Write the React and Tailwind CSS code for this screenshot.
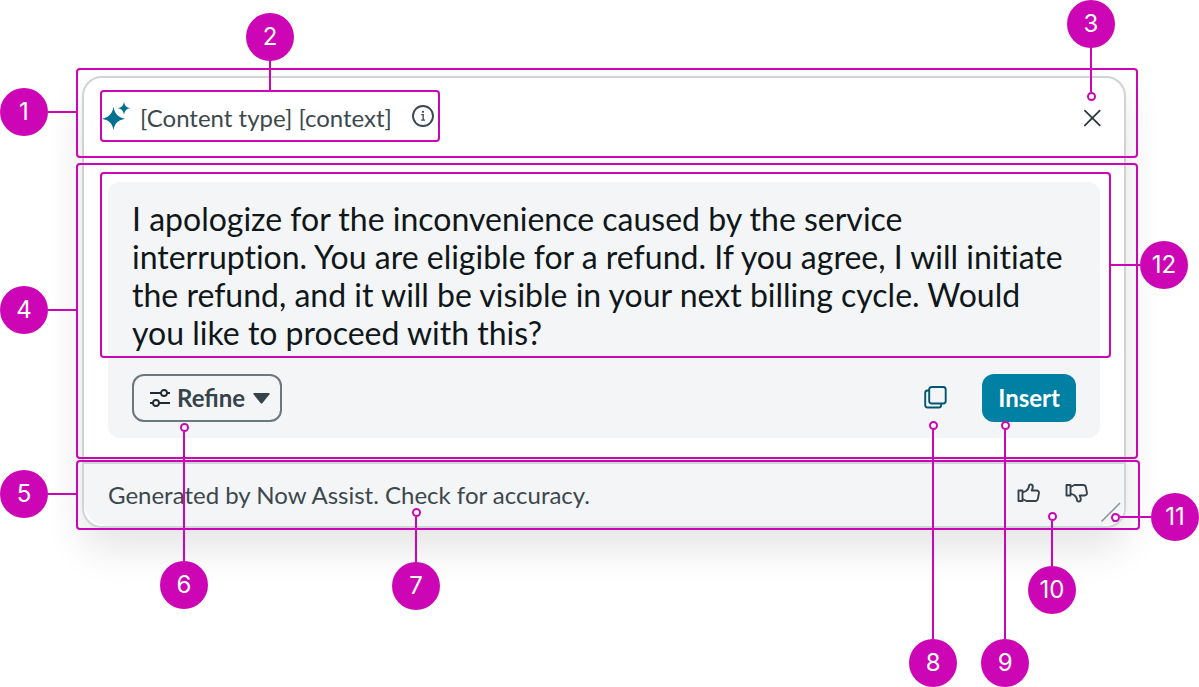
import clsx from 'clsx'

function Frame({ className }) {
  return (
    <div
      className={clsx(
        'absolute border-2 border-[#cc06b4] rounded pointer-events-none',
        className
      )}
    />
  )
}

const directions = {
  right: 'flex-row',
  left: 'flex-row-reverse',
  down: 'flex-col',
  up: 'flex-col-reverse',
}

// direction = where the line goes, starting from the numbered badge
function Callout({ number, direction, dot, className }) {
  const horizontal = direction === 'left' || direction === 'right'

  return (
    <div
      className={clsx(
        'absolute z-10 flex items-center pointer-events-none',
        directions[direction],
        className
      )}
    >
      <span className="flex h-12 w-12 shrink-0 items-center justify-center rounded-full bg-[#cc06b4] font-[Inter,sans-serif] text-2xl leading-6 text-white">
        {number}
      </span>
      <span className={clsx('flex-1 bg-[#cc06b4]', horizontal ? 'h-[2px]' : 'w-[2px]')} />
      {dot && (
        <span className="w-[9px] h-[9px] shrink-0 rounded-full border-2 border-[#cc06b4] bg-white" />
      )}
    </div>
  )
}

function SparkleIcon() {
  return (
    <svg width="28" height="28" viewBox="0 0 28 28" fill="#00718f" aria-hidden="true">
      <path d="M11.500 5C13 12 15.500 15 23 16.800C15.500 18.600 13 21 11.500 28C10 21 7.500 18.600 0 16.800C7.500 15 10 12 11.500 5Z" />
      <path d="M22 0C22.900 3.800 24.200 5.300 28 6.200C24.200 7.100 22.900 8.600 22 12.400C21.100 8.600 19.800 7.100 16 6.200C19.800 5.300 21.100 3.800 22 0Z" />
    </svg>
  )
}

function InfoIcon() {
  return (
    <svg width="22" height="22" viewBox="0 0 22 22" fill="none" stroke="#3c484d" aria-hidden="true">
      <circle cx="11" cy="11" r="10" strokeWidth="1.9" />
      <path d="M9.200 9.700h2v5.300M9.200 15.200h3.800" strokeWidth="1.300" />
      <circle cx="11" cy="6.800" r="1.100" fill="#3c484d" stroke="none" />
    </svg>
  )
}

function CloseIcon() {
  return (
    <svg width="24" height="24" viewBox="0 0 24 24" fill="none" stroke="#2c383d" strokeWidth="1.800" aria-hidden="true">
      <path d="M4.900 4.600l14.800 14.800M19.700 4.600l-14.800 14.800" strokeLinecap="round" />
    </svg>
  )
}

function SlidersIcon() {
  return (
    <svg width="20" height="20" viewBox="0 0 20 20" fill="none" stroke="#1f2b30" strokeWidth="1.800" aria-hidden="true">
      <path d="M0 5h11M17 5h3M0 15h3M9 15h11" />
      <circle cx="14" cy="5" r="3" />
      <circle cx="6" cy="15" r="3" />
    </svg>
  )
}

function CopyIcon() {
  return (
    <svg width="24" height="24" viewBox="0 0 24 24" fill="none" stroke="#00566e" strokeWidth="1.900" aria-hidden="true">
      <rect x="6.200" y="1" width="16.500" height="16.500" rx="2.500" />
      <path d="M6 4.500H4.700Q2.200 4.500 2.200 7V19Q2.200 21.500 4.700 21.500H15.700Q18.200 21.500 18.200 19V17.500" />
    </svg>
  )
}

function ThumbIcon({ down }) {
  return (
    <svg
      width="24"
      height="24"
      viewBox="0 0 24 24"
      fill="none"
      stroke="#36434a"
      strokeWidth="1.900"
      strokeLinejoin="round"
      className={down ? '-scale-y-100' : ''}
      aria-hidden="true"
    >
      <path d="M2.500 9.500h4v10.500h-4z" />
      <path d="M6.500 11.500L10 10C12 8.500 13 6.500 13 4.700C13 3.100 16.800 2.700 16.800 5.700C16.800 7.100 16.300 8.300 15.700 9.500H20.500C22.300 9.500 23.200 10.700 22.900 12.300L21.900 17.700C21.600 19.300 20.700 20 19.300 20H10.500L6.500 18" />
    </svg>
  )
}

export default function App() {
  return (
    <main className="min-h-screen overflow-hidden bg-white pl-[82px] pr-[73px] pt-[76px] font-[Lato,sans-serif]">
      <article className="relative rounded-[20px] border-2 border-[#cfd5d7] bg-white shadow-[0_20px_40px_rgba(0,0,0,0.11)]">
        <header className="relative flex h-20 items-center justify-between pl-4 pr-5">
          <Frame className="-left-2 -right-[14px] -top-[10px] bottom-0" />
          <Callout number={1} direction="right" className="right-full top-[10px] mr-2 w-[76px]" />

          <div className="relative -mt-1 flex h-[52px] items-center pl-0.5 pr-1.5">
            <Frame className="inset-0" />
            <Callout number={2} direction="down" className="bottom-full left-1/2 h-[77px] -translate-x-1/2" />
            <SparkleIcon />
            <h1 className="ml-[10px] mt-1 text-2xl leading-8 text-[#3c484d]">[Content type] [context]</h1>
            <button aria-label="More information" className="ml-5">
              <InfoIcon />
            </button>
          </div>

          <button aria-label="Close" className="relative">
            <CloseIcon />
            <Callout number={3} direction="down" dot className="bottom-full -left-[13px] mb-[5px] h-[101px]" />
          </button>
        </header>

        <section className="relative px-6 pb-6 pt-6">
          <Frame className="-left-2 -right-[14px] bottom-[3px] top-[5px]" />
          <Callout number={4} direction="right" className="right-full top-32 mr-2 w-[76px]" />

          <div className="rounded-xl bg-[#f4f5f7] pb-4">
            <div className="relative px-6 pt-[18px]">
              <Frame className="-bottom-1.5 -left-2 -right-[11px] -top-[10px]" />
              <Callout number={12} direction="left" className="left-full top-[59px] ml-[11px] w-[77px]" />
              <p className="text-[32px] leading-[38px] text-[#10171a] [font-variant-ligatures:none]">
                I apologize for the inconvenience caused by the service interruption. You are eligible
                for a refund. If you agree, I will initiate the refund, and it will be visible in your
                next billing cycle. Would you like to proceed with this?
              </p>
            </div>

            <div className="mt-[22px] flex items-center justify-between px-6">
              <div className="relative">
                <button className="flex h-12 items-center rounded-xl border-2 border-[#6b777d] pl-4 pr-[10px] text-2xl font-bold leading-8 text-[#36434a]">
                  <SlidersIcon />
                  <span className="ml-[7px]">Refine</span>
                  <svg width="17" height="11" viewBox="0 0 17 11" fill="#36434a" className="ml-2" aria-hidden="true">
                    <path d="M1 0H16Q17 .5 16.500 1.300L9.500 10Q8.500 11 7.500 10L.5 1.300Q0 .5 1 0Z" />
                  </svg>
                </button>
                <Callout number={6} direction="up" dot className="left-7 top-full mt-px h-[186px]" />
              </div>

              <div className="flex items-center gap-[35px]">
                <button aria-label="Copy" className="relative flex h-12 items-center">
                  <CopyIcon />
                  <Callout number={8} direction="up" dot className="-left-[14px] top-full -mt-px h-[266px]" />
                </button>
                <div className="relative">
                  <button className="h-12 rounded-xl bg-[#0080a3] px-4 text-2xl font-bold leading-8 text-white">
                    Insert
                  </button>
                  <Callout number={9} direction="up" dot className="-left-px top-full -mt-px h-[266px]" />
                </div>
              </div>
            </div>
          </div>
        </section>

        <footer className="relative flex h-16 items-center justify-between rounded-b-3xl border-t-2 border-[#cfd5d7] bg-[#f4f5f7] pl-6 pr-9">
          <Frame className="-bottom-1 -left-2 -right-4 -top-1" />
          <Callout number={5} direction="right" className="right-full top-[6px] mr-2 w-[76px]" />

          <div className="relative">
            <p className="text-2xl leading-8 text-[#3c484d]">
              Generated by Now Assist. Check for accuracy.
            </p>
            <Callout number={7} direction="up" dot className="left-[284px] top-full -mt-[3px] h-[102px]" />
          </div>

          <div className="relative -mt-1 flex gap-6">
            <button aria-label="Good response">
              <ThumbIcon />
            </button>
            <button aria-label="Bad response">
              <ThumbIcon down />
            </button>
            <Callout number={10} direction="up" dot className="left-3 top-full mt-[7px] h-[102px]" />
          </div>

          <svg
            width="24"
            height="24"
            viewBox="0 0 24 24"
            stroke="#8a9498"
            strokeWidth="1.500"
            className="absolute bottom-0.5 right-0.5"
            aria-hidden="true"
          >
            <path d="M3.500 21.500L22 3M15 22L22 15" />
          </svg>
          <Callout number={11} direction="left" dot className="-right-[75px] top-[29px] w-[88px]" />
        </footer>
      </article>
    </main>
  )
}
